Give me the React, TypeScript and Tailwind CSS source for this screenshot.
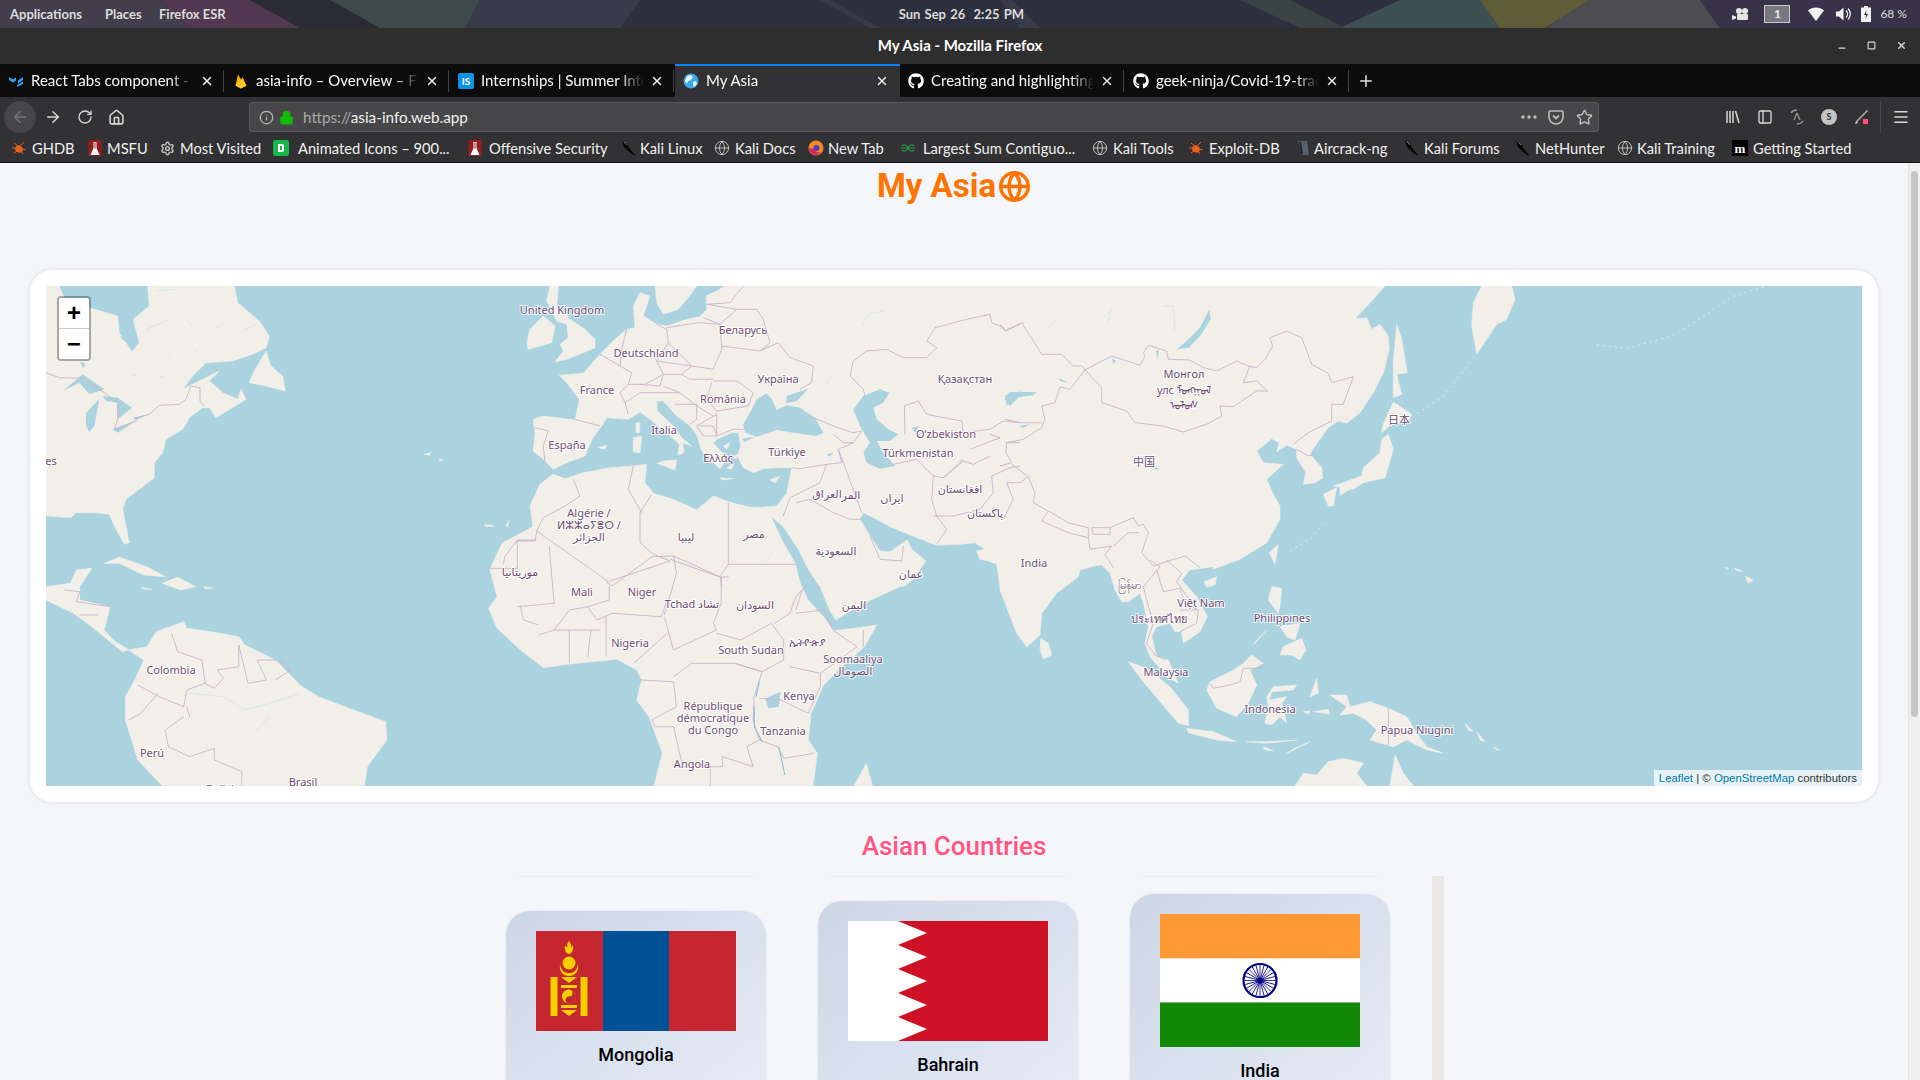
import React from "react";
import { ArrowLeft, ArrowRight, RotateCw, Home, Info, Lock, Star, Menu, X, Plus, Globe, Settings, Minus, Square, PanelLeft } from "lucide-react";
import { FaGithub } from "react-icons/fa";

const z = (ox: number, oy: number, sx: number, sy: number) => (s: string) =>
  s.trim().split(/\s+/).map((p) => {
    const [x, y] = p.split(",").map(Number);
    return `${(ox + x * sx).toFixed(1)},${(oy + y * sy).toFixed(1)}`;
  }).join(" ");
const T = 1 / 3;
const K = 960 / 1568;
const Z9 = z(46, 286, T, T);
const Z10 = z(500, 286, T, T);
const Z11 = z(1000, 286, T, T);
const Z12 = z(1000, 560, T, T);
const Z7 = z(0, 500, K, T);
const Z8 = z(960, 500, K, T);
const Z6 = z(960, 160, K, T);

const land: string[] = [
  // Eurasia and Africa
  Z11("1155,0 1120,40 1065,98 1100,95 1115,130 1140,115 1165,150 1168,190 1150,260 1120,320 1080,380 1040,412 1015,405 985,425 945,480 930,505 965,545 968,575 945,590 910,595 918,560 890,515 890,490 860,478 830,497 838,470 815,458 770,495 790,530 850,535 800,580 820,625 840,660 840,700 800,770 720,820 640,850") + " " +
    Z12("640,20 570,30 545,60 590,110 622,170 600,215 550,250 545,215 525,215 510,190 470,200 455,230 470,290 505,300 535,370 500,350 450,290 435,250 445,200 430,130 420,100 385,125 365,125 345,90 330,40 305,15 280,18 240,30 235,50 170,100 125,160 120,225 80,260 50,220 0,90") + " " +
    Z10("1500,900 1490,835 1465,825 1440,820 1430,795 1455,790 1425,770 1380,775 1310,778 1225,745 1170,722 1130,700 1090,680 1080,700 1110,750 1140,795 1170,797 1210,770 1222,762 1235,790 1278,825 1260,850 1240,880 1215,900") + " " +
    Z7("1470,260 1440,285 1400,320 1365,360 1355,330 1340,262") + " " +
    Z10("925,850 895,790 850,722 812,690 850,770 885,830 900,890") + " " +
    Z7("1320,300 1345,350 1362,392 1395,385 1432,375 1412,440 1375,500 1345,555 1325,640 1320,720 1335,760 1328,857 1068,857 1082,760 1060,650 1040,600 1048,540 1040,510 1008,478 930,492 888,503 850,450 812,385 798,325 812,290 800,208 820,130 870,80") + " " +
    Z10("95,690 90,660 120,595 158,565 195,578 250,560 330,545 395,540 440,535 435,590 460,622 520,640 590,672 640,630 700,652 760,665 830,660 860,622 872,560 875,545 830,545 790,548 760,560 730,545 712,510 722,480 715,440 695,440 650,460 640,472 682,515 660,548 640,530 605,495 590,445 565,415 530,390 490,345 470,345 472,375 520,420 545,455 575,480 548,470 552,500 535,508 538,475 500,440 450,400 420,378 385,400 320,395 305,420 278,455 255,510 200,530 160,550 130,520 100,495 105,440 100,400 130,390 225,402 238,340 200,290 178,268 250,262 300,205 345,160 380,130 405,125 400,60 420,20 450,30 430,90 470,115 500,120 560,100 600,92 620,70 618,30 650,15 675,0"),
  // Scandinavia, British Isles, Mediterranean islands
  Z10("465,0 590,0 565,35 535,70 490,85 470,50"),
  Z10("140,45 150,0 175,0 170,65 200,85 210,100 255,130 285,160 285,185 250,200 200,220 165,228 190,195 180,175 205,155 200,115 170,105"),
  Z10("90,130 130,90 165,120 155,170 85,190 80,170"),
  Z10("400,455 425,450 420,500 400,498"),
  Z10("408,410 420,410 418,440 408,440"),
  Z10("470,532 490,525 530,522 525,552"),
  Z10("295,485 320,478 315,490"),
  Z10("810,582 840,570 825,590"),
  Z10("660,575 700,578 665,582"),
  Z10("670,480 690,470 680,490"),
  Z10("700,510 715,505 708,520"),
  Z10("680,545 700,535 695,550"),
  // East Asia islands
  Z11("1190,115 1205,160 1222,260 1190,265 1205,325 1180,335 1180,230"),
  Z11("1445,0 1535,0 1545,40 1520,100 1490,115 1460,160 1430,205 1415,120 1420,50"),
  Z11("1180,348 1235,385 1225,405 1180,410 1145,440 1150,415"),
  Z11("1165,445 1180,490 1155,575 1090,590 1060,610 1000,600 1085,570 1090,545 1140,500 1145,460"),
  Z11("970,625 1010,605 1000,660 985,660"),
  Z11("1020,600 1065,600 1020,628"),
  Z11("835,775 825,835 808,800"),
  Z12("612,65 650,50 645,75 620,82"),
  Z12("122,235 145,250 155,285 130,297 120,270"),
  // South East Asia
  Z12("815,80 845,85 840,135 835,160 805,120"),
  Z12("840,200 900,190 885,240 860,230"),
  Z12("850,260 905,235 918,270 900,300 875,285 840,285"),
  Z12("800,210 760,255 775,235"),
  Z12("755,285 790,310 750,330 770,375 745,430 710,470 650,445 620,390 630,365 700,330 730,310"),
  Z12("385,305 440,325 510,380 550,430 565,450 565,497 535,490 480,425 430,365"),
  Z12("560,505 640,515 710,545 650,540 565,518"),
  Z12("740,545 800,545 890,540 800,550"),
  Z12("860,580 930,545 885,565"),
  Z12("790,560 820,572 795,570"),
  Z12("820,380 890,375 880,390 815,395 808,420 860,410 845,430 860,490 840,470 815,495 795,490 805,440 800,410"),
  Z12("910,455 930,452 925,462"),
  Z12("940,455 985,448 990,462"),
  Z12("930,410 950,355 955,400"),
  Z12("990,405 1040,405 1050,440 1110,425 1165,445 1220,470 1250,520 1280,560 1330,580 1280,570 1220,540 1180,560 1110,540 1130,510 1100,480 1060,460 1020,465 1040,440"),
  Z12("1395,490 1420,515 1405,510"),
  Z12("1430,515 1455,545 1440,540"),
  Z12("1480,560 1500,570 1490,570"),
  Z12("885,678 910,640 950,645 985,605 1030,595 1090,610 1070,640 1100,678"),
  Z12("1185,585 1210,640 1240,678 1170,678"),
  // North America
  Z9("0,0 40,0 60,50 130,65 215,90 220,140 258,198 280,170 262,100 310,60 305,0 565,0 575,50 640,105 670,150 660,185 620,205 560,225 480,230 440,270 410,310 520,255 490,285 530,320 575,340 585,310 600,340 510,395 490,365 470,365 430,395 410,430 360,460 350,500 325,530 325,575 240,640 230,670 250,770 235,775 205,720 190,685 150,680 90,680 75,695 0,690"),
  Z9("660,195 675,240 710,270 718,315 660,300 610,290 625,255"),
  Z7("75,260 115,250 125,210 150,205 130,260 130,300 180,320 170,390 185,420 210,450 200,455 150,380 120,340 75,300"),
  Z7("170,190 195,172 240,200 270,230 235,225 195,190"),
  Z7("265,250 290,232 320,260 295,270"),
  Z7("230,262 248,268 235,268"),
  Z7("333,260 348,265 335,266"),
  // South America
  Z7("210,450 240,440 255,395 300,365 305,385 345,395 390,410 400,435 450,480 490,555 520,590 570,625 630,665 632,720 600,800 595,857 265,857 225,780 205,660 205,590 220,540 235,480"),
  // Madagascar, Hawaii
  Z7("1395,857 1415,790 1425,857"),
  Z8("1283,228 1295,240 1288,250 1285,240"),
  Z8("1250,202 1256,206 1252,208"),
  Z8("1265,205 1278,214 1268,212"),
  // Atlantic specks
  Z9("1135,505 1155,500 1150,508"),
  Z9("1180,520 1192,522 1182,525"),
  Z9("1315,715 1345,720 1320,722"),
  Z9("1380,720 1390,702 1385,722"),
];

const water: string[] = [
  Z10("1140,310 1168,320 1150,350 1120,365 1130,400 1165,430 1195,445 1170,465 1130,465 1150,500 1185,540 1140,548 1100,530 1090,500 1110,470 1080,420 1060,370 1090,330"),
  Z10("750,380 770,340 800,322 815,340 830,372 860,358 900,365 945,395 970,440 950,450 880,440 830,432 770,452 735,440 730,415"),
  Z10("860,330 925,308 890,345 858,352"),
  Z10("725,458 765,452 735,468"),
  Z10("1515,340 1560,315 1560,330 1530,360"),
  Z10("980,505 1000,500 990,512"),
  Z10("1235,425 1258,420 1245,440"),
  Z11("628,70 632,100 600,150 565,185 530,190 560,165 600,125"),
  Z11("15,330 30,318 110,318 100,328 35,335 20,360"),
  Z11("55,420 90,415 70,425"),
  Z11("175,275 205,290 180,285"),
  Z11("335,218 350,225 340,232"),
  Z11("468,195 478,192 472,218"),
  Z11("460,540 478,548 465,552"),
  Z9("50,315 110,265 175,310 130,325 100,290"),
  Z9("120,380 160,340 145,420 130,438 120,420"),
  Z9("170,330 215,335 258,365 215,400 215,350 180,345"),
  Z9("200,430 270,405 215,440"),
  Z9("260,395 310,385 270,403"),
  Z9("220,150 245,160 235,165"),
  Z9("520,235 565,255 540,250"),
  Z9("255,40 280,60 260,68"),
  Z9("102,228 118,232 112,248"),
  Z7("1250,595 1275,575 1272,620 1255,625"),
];

const rivers: string[] = [
  Z7("1232,620 1232,680 1245,725"),
  Z7("1272,740 1282,825"),
  Z7("1240,545 1235,590"),
];

const streams: string[] = [
  Z7("310,580 365,590 400,630 440,610 490,580"),
  Z7("440,650 415,700"),
  Z10("800,240 830,260"),
  Z10("975,300 1000,260"),
  Z10("1085,120 1105,85 1150,75"),
  Z11("490,60 520,60 525,135"),
  Z11("310,95 335,70 320,120"),
  Z11("145,125 175,98"),
  Z10("790,835 820,800"),
  Z9("300,130 370,100"),
  Z9("500,130 535,110"),
  Z9("590,135 640,110"),
  Z9("360,215 380,195"),
  Z9("340,270 355,275"),
  Z9("420,100 445,125"),
  Z9("330,15 385,10"),
  Z9("440,185 455,200"),
  Z9("255,265 270,270"),
  Z9("385,265 395,272"),
];

const dashed: string[] = [
  Z11("1420,215 1390,255 1330,330 1240,390"),
  Z11("970,710 935,755 870,795"),
  Z6("1040,555 1090,565 1160,530 1210,475 1260,410 1315,380"),
];

const borders: string[] = [
  Z9("0,260 40,275 110,277 175,320 215,350 215,400 205,430 270,405 270,395 310,385 340,358 400,355 420,340 435,300 462,305 462,345 475,360"),
  Z10("225,400 300,420"),
  Z10("105,425 145,435 130,480 135,530"),
  Z10("300,205 360,240 395,260 385,295 360,320 375,350 385,385"),
  Z10("380,130 365,190 360,240"),
  Z10("470,115 500,130 505,170 470,225 490,265 435,295 385,295"),
  Z10("500,125 595,110 660,115 665,190 640,250 575,240 505,170"),
  Z10("470,225 575,240 545,265 490,265 480,300 420,295"),
  Z10("620,55 710,70 770,70 790,100 810,170 780,195 665,180"),
  Z10("620,55 690,50 730,0"),
  Z10("610,95 660,115 710,70"),
  Z10("780,195 835,170 870,215 940,240 935,290 900,310"),
  Z10("640,285 710,285 760,320 745,360 650,375 620,340 635,290"),
  Z10("545,265 570,280 640,280"),
  Z10("490,300 540,320 590,360 640,390"),
  Z10("525,355 590,355 590,400 570,415"),
  Z10("600,420 640,420 650,450 610,450 590,420 650,385 650,450 700,430 735,430"),
  Z10("375,350 420,320 495,320 540,320"),
  Z10("940,395 1000,420 1060,440 1085,435 1060,470 1015,490 1025,530 980,535 900,548 875,545"),
  Z10("980,535 960,590 870,635 850,690"),
  Z10("890,650 930,640 1000,680 1050,700 1085,700"),
  Z10("1015,490 1045,570 1070,640 1085,680"),
  Z10("1000,445 1030,470 1060,470"),
  Z10("1110,750 1140,820 1205,825 1210,780"),
  Z10("1180,535 1250,520 1300,570 1330,575 1390,520"),
  Z10("1300,570 1295,640 1310,690 1340,730 1310,775"),
  Z10("1300,690 1360,690 1440,670 1480,620 1475,570 1530,545 1560,540"),
  Z10("1330,575 1390,525 1420,535 1470,510"),
  Z10("1215,445 1213,360 1255,345 1280,385 1385,405 1390,440 1470,430 1510,405 1560,410"),
  Z10("1410,490 1460,470 1500,455 1470,445"),
  Z10("1515,470 1560,470"),
  Z10("1060,225 1100,195 1160,190 1210,215 1280,215 1310,185 1280,165 1305,125 1400,100 1470,85 1475,110 1510,125 1515,135 1560,115"),
  Z10("1060,225 1050,270 1090,310 1095,330"),
  Z11("0,115 15,135 65,110 125,205 185,205 220,240 245,240 255,252 335,210 420,238 435,210 430,200 445,178 500,195 505,220 570,222 610,245 650,255 710,225 745,240 770,245 795,220 818,180 810,155 860,135 905,155 935,235 985,262 995,290 1060,272 1030,355 995,355 995,405 925,440 880,475"),
  Z11("255,252 305,305 305,350 380,375 405,410 490,420 550,438 620,415 665,390 660,360 700,362 770,315 803,315 770,285 730,290 750,240"),
  Z11("255,252 210,310 180,303 165,350 125,360 135,400 125,425 70,460 20,470 18,500 35,530 0,540"),
  Z11("15,400 60,410 125,410"),
  Z11("35,535 85,572 105,620 100,650 145,675 205,710 265,725"),
  Z11("145,675 125,705 205,740 265,755 265,725"),
  Z11("275,725 330,725 330,745 280,745 275,725"),
  Z11("330,725 400,695 415,720 430,715 445,740 425,800 460,840 505,825 555,810 600,845"),
  Z11("265,755 270,790 335,780 315,805 340,845"),
  Z11("340,780 385,740 415,740"),
  Z11("20,590 60,590 85,572"),
  Z11("20,590 40,640 10,700"),
  Z11("890,490 925,510 945,505"),
  Z12("450,0 480,20 430,80 440,120 460,190 440,250 465,285 495,300"),
  Z12("470,30 490,95 540,85 555,130 595,150 590,190 540,215"),
  Z12("500,0 545,40 530,65 590,150 540,150"),
  Z12("630,370 640,385 690,375 720,365 730,325 790,325"),
  Z12("1165,445 1165,555"),
  Z10("220,580 240,630 195,660 130,695 110,735 105,765 50,765 15,810 10,835"),
  Z10("110,735 330,890"),
  Z10("400,540 385,610 425,680"),
  Z10("455,625 420,680 420,770 460,805"),
  Z10("685,650 685,835 660,870 665,900"),
  Z10("685,835 888,835"),
  Z10("510,820 665,875"),
  Z10("460,805 510,825 330,885"),
  Z7("897,138 905,310 845,320"),
  Z7("990,245 1000,258 1065,170 1100,168 1178,232 1190,230"),
  Z7("1100,168 1105,220 1085,345"),
  Z7("800,205 845,205 845,120 875,120"),
  Z7("995,258 995,300 960,320 930,330 905,390 880,405"),
  Z7("850,320 855,360 880,375"),
  Z7("960,320 975,360 1000,340 1080,350 1090,300"),
  Z7("1178,232 1178,310 1165,370 1170,390"),
  Z7("1085,350 1100,450 1170,390"),
  Z7("990,350 990,470"),
  Z7("1090,400 1035,490"),
  Z7("1170,400 1210,420 1260,370 1280,420 1280,480 1245,515 1200,490"),
  Z7("1300,340 1345,330 1360,390 1400,440 1340,520 1290,500"),
  Z7("1310,270 1300,330"),
  Z7("1320,250 1300,290 1290,340 1265,370"),
  Z7("1410,440 1410,390"),
  Z7("1340,520 1340,560 1320,640 1275,600 1240,595"),
  Z7("1245,515 1230,600"),
  Z7("1100,530 1130,490 1200,490 1245,515"),
  Z7("1232,600 1230,660 1240,720 1220,740 1230,800 1180,770 1180,800 1115,800 1100,680 1070,680"),
  Z7("1045,540 1100,545 1105,620 1065,660 1070,680"),
  Z7("1240,720 1270,740 1280,775 1330,760"),
  Z7("1160,800 1160,857"),
  Z7("930,390 930,490"),
  Z7("965,390 960,470"),
  Z7("905,390 930,390 980,390"),
  Z7("280,400 290,455 330,480 335,550 350,565 365,535 355,510 390,500 390,435 405,550 435,540 420,480 455,480 475,510 450,540"),
  Z7("225,555 260,590 300,620 305,570 335,550"),
  Z7("300,650 270,690 275,740 310,770 350,745 350,780 395,815 395,857"),
  Z7("258,580 230,640 210,660"),
  Z7("305,620 310,650"),
  Z7("105,270 130,275 125,305 180,320"),
  Z7("130,345 160,345"),
];

const labels: [string, number, number][] = [
  ["United Kingdom", 562, 309], ["Беларусь", 743, 329], ["Deutschland", 646, 352], ["Україна", 778, 378],
  ["Қазақстан", 965, 378], ["France", 597, 389], ["România", 723, 398], ["Italia", 664, 429],
  ["O‘zbekiston", 946, 433], ["Türkmenistan", 918, 452], ["España", 567, 444], ["Ελλάς", 718, 457],
  ["Türkiye", 787, 451], ["العراق", 827, 493], ["المر", 851, 494], ["ایران", 892, 497],
  ["افغانستان", 960, 488], ["پاکستان", 985, 512], ["السعودية", 836, 550], ["مصر", 754, 533],
  ["ليبيا", 686, 536], ["Algérie /", 589, 512], ["ⵍⵣⵣⴰⵢⴻⵔ /", 589, 524], ["الجزائر", 589, 536],
  ["موريتانيا", 520, 571], ["عمان", 911, 573], ["Mali", 582, 591], ["Niger", 642, 591],
  ["Tchad تشاد", 692, 603], ["السودان", 755, 604], ["اليمن", 854, 604], ["Nigeria", 630, 642],
  ["South Sudan", 751, 649], ["ኢትዮጵያ", 807, 641], ["Soomaaliya", 853, 658], ["الصومال", 853, 670],
  ["Colombia", 171, 669], ["Kenya", 799, 695], ["République", 713, 705], ["démocratique", 713, 717],
  ["du Congo", 713, 729], ["Tanzania", 783, 730], ["Angola", 692, 763], ["Perú", 152, 752],
  ["Brasil", 303, 781], ["Bolivia", 223, 788], ["es", 51, 460], ["Монгол", 1184, 373],
  ["улс ᠮᠣᠩᠭᠣᠯ", 1184, 389], ["ᠤᠯᠤᠰ", 1184, 404], ["日本", 1399, 419], ["中国", 1144, 461],
  ["India", 1034, 562], ["မြန်မာ", 1129, 584], ["Việt Nam", 1201, 602], ["ประเทศไทย", 1159, 618],
  ["Philippines", 1282, 617], ["Malaysia", 1166, 671], ["Indonesia", 1270, 708], ["Papua Niugini", 1417, 729],
];

function WorldMap() {
  return (
    <svg viewBox="46 286 1816 500" className="absolute inset-0 block h-full w-full [font-family:'Noto_Sans','DejaVu_Sans','Noto_Sans_CJK_SC',sans-serif]">
      {land.map((p, i) => <polygon key={i} points={p} fill="#f2efe9" stroke="#f2efe9" strokeWidth="0.6" strokeLinejoin="round" />)}
      {streams.map((p, i) => <polyline key={i} points={p} fill="none" stroke="#d5e6ea" strokeWidth="0.9" />)}
      {water.map((p, i) => <polygon key={i} points={p} fill="#aad3df" />)}
      {dashed.map((p, i) => <polyline key={i} points={p} fill="none" stroke="#e4e8e4" strokeWidth="1" strokeDasharray="2 4" />)}
      {borders.map((p, i) => <polyline key={i} points={p} fill="none" stroke="#c8b3c8" strokeWidth="0.9" strokeLinejoin="round" />)}
      {rivers.map((p, i) => <polyline key={i} points={p} fill="none" stroke="#8fbcd0" strokeWidth="1.1" />)}
      {labels.map(([t, x, y]) => (
        <text key={t} x={x} y={y} textAnchor="middle" dominantBaseline="central" fontSize="11" className="fill-[#6f4f73] stroke-white/80 stroke-[2px] [paint-order:stroke]">{t}</text>
      ))}
    </svg>
  );
}

function Bug({ c = "#e8601c" }: { c?: string }) {
  return (
    <svg viewBox="0 0 16 16" className="h-4 w-4 shrink-0">
      <path d="M3 3l4 3M13 2L9 6M1 8h4M11 9l4 1M3 13l3-2M12 14l-2-3" stroke={c} strokeWidth="1" />
      <ellipse cx="8" cy="9" rx="4" ry="3.4" fill={c} transform="rotate(25 8 9)" />
    </svg>
  );
}
function Msf() {
  return (
    <svg viewBox="0 0 16 16" className="h-4 w-4 shrink-0">
      <rect x="1.5" y="0" width="13" height="16" fill="#8f1d22" />
      <path d="M6.5 2h3v6l3 7h-9l3-7z" fill="#fff" />
      <path d="M7.5 2.5h1v6h-1z" fill="#8f1d22" />
    </svg>
  );
}
function Dragon() {
  return (
    <svg viewBox="0 0 16 16" className="h-4 w-4 shrink-0">
      <path d="M1 1l5 3 3 5 5 6-1 .5L7 11 3 7z" fill="#060606" />
      <path d="M3 2l3 3" stroke="#999" strokeWidth=".7" />
    </svg>
  );
}
function Earth() {
  return <Globe size={16} strokeWidth={1.4} className="shrink-0 text-[#c8c8c8]" />;
}

const bookmarks: { t: string; w: string; ic: React.ReactNode; g: string }[] = [
  { t: "GHDB", w: "w-[76px]", g: "gap-[5px]", ic: <Bug /> },
  { t: "MSFU", w: "w-[73px]", g: "gap-[4px]", ic: <Msf /> },
  { t: "Most Visited", w: "w-[113px]", g: "gap-[5px]", ic: <Settings size={15} strokeWidth={2.2} className="shrink-0 text-[#c8c8c8]" /> },
  { t: "Animated Icons – 900...", w: "w-[194px]", g: "gap-[9px]", ic: <span className="flex h-4 w-4 shrink-0 items-center justify-center rounded-[2px] bg-[#16b84e]"><span className="h-2 w-1.5 rounded-r-[2px] border-2 border-white" /></span> },
  { t: "Offensive Security", w: "w-[154px]", g: "gap-[6px]", ic: <Msf /> },
  { t: "Kali Linux", w: "w-[93px]", g: "gap-[3px]", ic: <Dragon /> },
  { t: "Kali Docs", w: "w-[94px]", g: "gap-[5px]", ic: <Earth /> },
  { t: "New Tab", w: "w-[92px]", g: "gap-[4px]", ic: <svg viewBox="0 0 16 16" className="h-4 w-4 shrink-0"><circle cx="8" cy="8" r="7.5" fill="#f58a1f" /><path d="M1 8a7 7 0 0 0 7 7c2 0 4-1 5-3-3 1-6 0-7-3z" fill="#d7265e" /><circle cx="8.5" cy="8" r="3" fill="#4a3bc4" /></svg> },
  { t: "Largest Sum Contiguo...", w: "w-[192px]", g: "gap-[7px]", ic: <svg viewBox="0 0 16 16" className="h-4 w-4 shrink-0"><path d="M1 8h14M2 6c2-2 5-1 6 2s4 4 6 2M14 6c-2-2-5-1-6 2s-4 4-6 2" fill="none" stroke="#2f8d46" strokeWidth="1.2" /></svg> },
  { t: "Kali Tools", w: "w-[96px]", g: "gap-[5px]", ic: <Earth /> },
  { t: "Exploit-DB", w: "w-[107px]", g: "gap-[5px]", ic: <Bug /> },
  { t: "Aircrack-ng", w: "w-[109px]", g: "gap-[3px]", ic: <svg viewBox="0 0 16 16" className="h-4 w-4 shrink-0"><path d="M3 1h9l2 14-7 0z" fill="#56616a" /><path d="M5 2l2 12" stroke="#1e2428" strokeWidth="2" /></svg> },
  { t: "Kali Forums", w: "w-[111px]", g: "gap-[4px]", ic: <Dragon /> },
  { t: "NetHunter", w: "w-[102px]", g: "gap-[4px]", ic: <Dragon /> },
  { t: "Kali Training", w: "w-[115px]", g: "gap-[4px]", ic: <Earth /> },
  { t: "Getting Started", w: "w-[130px]", g: "gap-[5px]", ic: <span className="flex h-4 w-4 shrink-0 items-center justify-center bg-black text-[13px] font-bold leading-none text-white [font-family:'Liberation_Serif',serif]">m</span> },
];

const tabs: { t: string; active?: boolean; ic: React.ReactNode }[] = [
  { t: "React Tabs component - Material-UI", ic: <svg viewBox="0 0 16 16" className="h-4 w-4"><path d="M1 4l4 2.5L8 4.5v3L5 9.5 1 7zM15 4v3l-5 3.5V7.5zM9 12l6-3.5v2.5L9 14z" fill="#2aa4f4" /></svg> },
  { t: "asia-info – Overview – Firebase", ic: <svg viewBox="0 0 16 16" className="h-[18px] w-[18px]"><path d="M2.500 12.500L5 1.500 8 6.500 9.500 4 13.500 12.500 8 15.500z" fill="#ffb300" /><path d="M2.500 12.500L8 6.500l5.500 6L8 15.500z" fill="#ffca28" /></svg> },
  { t: "Internships | Summer Internship", ic: <span className="flex h-4 w-4 items-center justify-center rounded-[2px] bg-[#0e94e4] text-[10px] font-bold leading-none text-white">IS</span> },
  { t: "My Asia", active: true, ic: <svg viewBox="0 0 16 16" className="h-4 w-4"><circle cx="8" cy="8" r="7.5" fill="#39a9e8" /><path d="M4 3l4-1 2 2-2 3-3 1-1 3-2-3zM10 9l3-1 1 3-3 3-1-2z" fill="#e6f4fb" /></svg> },
  { t: "Creating and highlighting code blocks", ic: <FaGithub size={16} className="text-white" /> },
  { t: "geek-ninja/Covid-19-tracker", ic: <FaGithub size={16} className="text-white" /> },
];

function Wallpaper() {
  return (
    <svg viewBox="0 0 1920 28" preserveAspectRatio="none" className="absolute inset-0 h-full w-full">
      <rect width="1920" height="28" fill="#2e303d" />
      <polygon points="0,0 160,0 190,28 0,28" fill="#433e4c" />
      <polygon points="160,0 250,0 300,28 190,28" fill="#523850" />
      <polygon points="250,0 330,0 380,28 300,28" fill="#2b2b36" />
      <polygon points="330,0 480,0 465,28 380,28" fill="#3e4a4a" />
      <polygon points="480,0 640,0 620,28 465,28" fill="#383b49" />
      <polygon points="1000,0 1020,28 1040,28 1012,0" fill="#373a48" />
      <polygon points="820,0 870,28 880,28 830,0" fill="#373a48" />
      <polygon points="1240,0 1300,28 1345,28 1290,0" fill="#3a4445" />
      <polygon points="1340,28 1400,0 1480,0 1500,28" fill="#3d5153" />
      <polygon points="1480,0 1590,0 1545,28 1500,28" fill="#5e5d38" />
      <polygon points="1590,0 1700,0 1720,28 1545,28" fill="#4d4c50" />
      <polygon points="1700,0 1920,0 1920,28 1720,28" fill="#393349" />
    </svg>
  );
}

function Mongolia() {
  return (
    <svg viewBox="0 0 200 100" className="block h-[100px] w-[200px]">
      <rect width="200" height="100" fill="#c4272f" />
      <rect x="67" width="66" height="100" fill="#015197" />
      <g fill="#f9cf02">
        <path d="M33 10c2 3 3 4 1.500 6 2 0 2.500-2 2.500-2 .5 4 0 8-4 9-4-1-4.500-5-4-9 1 2 2 2 2.500 2-1-2 0-4 1.500-6z" />
        <circle cx="33" cy="32" r="6.500" />
        <path d="M24 33c1 7 5 9 9 9s8-2 9-9c1 8-3 12-9 12s-10-4-9-12z" />
        <path d="M25 46h16l-8 6z" />
        <rect x="14.500" y="46" width="7" height="39" />
        <rect x="44.500" y="46" width="7" height="39" />
        <rect x="25" y="54" width="16" height="3" />
        <rect x="25" y="74" width="16" height="3" />
        <path d="M25 79h16l-8 6z" />
        <circle cx="33" cy="65.500" r="7" />
      </g>
      <path d="M33 58.500a3.500 3.500 0 0 1 0 7 3.500 3.500 0 0 0 0 7 7 7 0 0 0 0-14z" fill="#c4272f" />
    </svg>
  );
}
function Bahrain() {
  return (
    <svg viewBox="0 0 200 120" className="block h-[120px] w-[200px]">
      <rect width="200" height="120" fill="#ce1126" />
      <path d="M0 0h50l29 12-29 12 29 12-29 12 29 12-29 12 29 12-29 12 29 12-29 12H0z" fill="#fff" />
    </svg>
  );
}
function India() {
  const spokes = Array.from({ length: 24 }, (_, i) => i * 15);
  return (
    <svg viewBox="0 0 200 133" className="block h-[133px] w-[200px]">
      <rect width="200" height="44.500" fill="#ff9933" />
      <rect y="44.500" width="200" height="44" fill="#fff" />
      <rect y="88.500" width="200" height="44.500" fill="#128807" />
      <circle cx="100" cy="66.500" r="16.500" fill="none" stroke="#000080" strokeWidth="2.200" />
      <circle cx="100" cy="66.500" r="3" fill="#000080" />
      {spokes.map((a) => <line key={a} x1="100" y1="66.500" x2="100" y2="51" stroke="#000080" strokeWidth="0.800" transform={`rotate(${a} 100 66.500)`} />)}
    </svg>
  );
}

function CountryCard({ name, flag }: { name: string; flag: React.ReactNode }) {
  return (
    <div className="w-[260px] rounded-[24px] bg-gradient-to-br from-[#cdd6e5] to-[#e6ecf7] px-[30px] pt-5 pb-9 shadow-[0_0_3px_rgba(0,0,0,0.08)]">
      {flag}
      <div className="mt-[14px] text-center text-[18px] leading-5 font-medium text-black">{name}</div>
    </div>
  );
}

export default function App() {
  return (
    <div className="flex h-screen w-full flex-col overflow-hidden bg-[#f5f6fa] [font-family:Lato,sans-serif]">
      <div className="relative flex h-7 shrink-0 items-center text-[13px] font-bold text-[#dcdcdc]">
        <Wallpaper />
        <span className="relative top-px ml-[10px] w-[95px]">Applications</span>
        <span className="relative top-px w-[54px]">Places</span>
        <span className="relative top-px">Firefox ESR</span>
        <span className="relative top-px ml-[673px] w-[124px] whitespace-nowrap [word-spacing:1px]">Sun Sep 26 &nbsp;2:25 PM</span>
        <div className="relative ml-auto flex items-center">
          <svg viewBox="0 0 18 14" className="mr-[14px] h-[14px] w-[18px]"><circle cx="7" cy="4" r="3" fill="#e5e5e5" /><circle cx="13" cy="4" r="3" fill="#e5e5e5" /><rect x="5" y="7" width="11" height="6" rx="1" fill="#e5e5e5" /><path d="M0 8l4 1.500v2L0 13z" fill="#e5e5e5" /></svg>
          <span className="mr-[18px] flex h-[18px] w-[26px] items-center justify-center border border-[#c9c9c9] bg-[#77787f] text-[12px] leading-none font-bold text-[#eee]">1</span>
          <svg viewBox="0 0 16 14" className="mr-[11px] h-[14px] w-[16px]"><path d="M0 3.500C4-.5 12-.5 16 3.500L8 14z" fill="#f2f2f2" /></svg>
          <svg viewBox="0 0 16 16" className="mr-[10px] h-4 w-4"><path d="M1 5.500h3L8.500 1.500v13L4 10.500H1z" fill="#f2f2f2" /><path d="M11 4.500c2 2 2 5 0 7M13 2.500c3 3 3 8 0 11" fill="none" stroke="#f2f2f2" strokeWidth="1.300" /></svg>
          <svg viewBox="0 0 10 16" className="mr-[9px] h-4 w-[10px]"><path d="M3 0h4v1.500h3V16H0V1.500h3z" fill="#f2f2f2" /><path d="M5.500 4L3 9h2l-.5 4L7 8H5z" fill="#393349" /></svg>
          <span className="mr-[13px] text-[12px] font-normal">68 %</span>
        </div>
      </div>

      <div className="relative flex h-9 shrink-0 items-center justify-center bg-[#2e2e2e] pb-[2px] text-[15px] font-bold text-white">
        My Asia - Mozilla Firefox
        <div className="absolute right-[13px] flex items-center gap-[20px] text-[#d8d8d8]">
          <Minus size={10} strokeWidth={3} className="translate-y-[3px]" />
          <Square size={9} strokeWidth={3} />
          <X size={11} strokeWidth={3} />
        </div>
      </div>

      <div className="flex h-[33px] shrink-0 bg-[#0c0c0d] text-[15px] text-[#f9f9fa]">
        {tabs.map((t) => (
          <div key={t.t} className={t.active ? "flex w-[225px] shrink-0 items-center border-t-2 border-[#0a84ff] bg-[#323234] pr-[11px] pb-[2px] pl-2" : "flex w-[225px] shrink-0 items-center pr-[11px] pl-2"}>
            <span className="flex w-4 shrink-0 justify-center">{t.ic}</span>
            <span className="ml-[7px] min-w-0 flex-1 overflow-hidden whitespace-nowrap [mask-image:linear-gradient(to_left,transparent,black_24px)]">{t.t}</span>
            <X size={14} strokeWidth={2.5} className="ml-[6px] shrink-0 text-[#eee]" />
            {!t.active && <span className="ml-[9px] h-[22px] w-px shrink-0 bg-[#444] -mr-[10px]" />}
          </div>
        ))}
        <Plus size={18} strokeWidth={2} className="mt-2 ml-[7px] text-[#e5e5e5]" />
      </div>

      <div className="flex h-[38px] shrink-0 items-center bg-[#323234] pt-[2px] text-[#d7d7d8]">
        <span className="ml-1 flex h-8 w-8 items-center justify-center rounded-full bg-[#47474a]"><ArrowLeft size={18} className="text-[#77777a]" /></span>
        <ArrowRight size={18} className="ml-[8px]" />
        <RotateCw size={16} className="ml-[15px]" />
        <Home size={17} strokeWidth={2.2} className="ml-[15px]" />
        <div className="ml-[124px] flex h-[30px] w-[1350px] items-center rounded-[3px] border border-[#59595b] bg-[#474749] text-[15.300px]">
          <Info size={15} className="ml-[9px] text-[#b5b5b5]" />
          <Lock size={15} fill="#12bc00" className="ml-[5px] text-[#12bc00]" />
          <span className="ml-[9px]"><span className="text-[#a9a9ab]">https://</span><span className="text-[#f0f0f0]">asia-info.web.app</span></span>
          <span className="ml-auto flex items-center text-[#bdbdbe]">
            <svg viewBox="0 0 16 4" className="mr-[11px] h-1 w-4"><circle cx="2" cy="2" r="1.700" fill="currentColor" /><circle cx="8" cy="2" r="1.700" fill="currentColor" /><circle cx="14" cy="2" r="1.700" fill="currentColor" /></svg>
            <svg viewBox="0 0 16 16" className="mr-[12px] h-4 w-4"><path d="M2 2h12a1 1 0 0 1 1 1v5a7 7 0 0 1-14 0V3a1 1 0 0 1 1-1z" fill="none" stroke="currentColor" strokeWidth="1.600" /><path d="M5 6.500l3 3 3-3" fill="none" stroke="currentColor" strokeWidth="1.800" /></svg>
            <Star size={17} strokeWidth={2} className="mr-[5px]" />
          </span>
        </div>
        <svg viewBox="0 0 16 16" className="ml-[126px] h-4 w-4"><path d="M2 2v12M5 2v12M8 2v12M10.500 2l3.500 12" stroke="currentColor" strokeWidth="1.500" fill="none" /></svg>
        <PanelLeft size={16} className="ml-[16px]" />
        <svg viewBox="0 0 16 16" className="ml-[16px] h-4 w-4 text-[#9a9a9a]"><path d="M8 1c-3 0-5 1.500-6 3M8 15c3 0 5-1.500 6-3M8 4l-3 7M8 4l3 7" fill="none" stroke="currentColor" strokeWidth="1.300" /></svg>
        <span className="ml-[16px] flex h-4 w-4 items-center justify-center rounded-full bg-[#c4c4c4] text-[9px] font-bold text-[#323234]">S</span>
        <svg viewBox="0 0 16 16" className="ml-[16px] h-4 w-4"><path d="M14 1L3 12l1 1L15 2z" fill="#b5b5b5" /><path d="M3 12l-1 3 3-1z" fill="#ddd" /><rect x="10" y="10" width="5" height="5" fill="#ff4f7b" /></svg>
        <span className="ml-[11px] h-8 w-px bg-[#4a4a4c]" />
        <Menu size={18} strokeWidth={2.200} className="ml-[11px]" />
      </div>

      <div className="box-content flex h-[27px] shrink-0 items-center border-b border-[#121214] bg-[#323234] pl-[11px] text-[14.700px] whitespace-nowrap text-[#f0f0f0]">
        {bookmarks.map((b) => (
          <span key={b.t} className={`flex shrink-0 items-center ${b.w} ${b.g}`}>
            {b.ic}
            <span>{b.t}</span>
          </span>
        ))}
      </div>

      <div className="flex min-h-0 flex-1">
        <main className="min-w-0 flex-1 overflow-hidden [font-family:Roboto,sans-serif]">
          <h1 className="flex h-[46px] items-center justify-center text-[33px] font-bold text-[#ff7300]">
            My Asia<Globe size={33} strokeWidth={2.500} className="ml-[2px]" />
          </h1>
          <section className="mx-[30px] mt-[61px] rounded-[22px] bg-white p-4 shadow-[0_0_4px_rgba(0,0,0,0.12)]">
            <div className="relative h-[500px] overflow-hidden bg-[#aad3df]">
              <WorldMap />
              <div className="absolute top-[10px] left-[11px] w-[34px] overflow-hidden rounded-[4px] border-2 border-black/30 bg-clip-padding">
                <div className="flex h-[31px] items-center justify-center border-b border-[#ccc] bg-white pt-[3px] text-[24px] font-bold text-black [font-family:'Liberation_Mono',monospace]">+</div>
                <div className="flex h-[30px] items-center justify-center bg-white pt-[3px] text-[24px] font-bold text-black [font-family:'Liberation_Mono',monospace]">−</div>
              </div>
              <div className="absolute right-0 bottom-0 bg-white/70 px-[5px] text-[11.400px] leading-4 text-[#333] [font-family:'Liberation_Sans',sans-serif]">
                <span className="text-[#0078a8]">Leaflet</span> | © <span className="text-[#0078a8]">OpenStreetMap</span> contributors
              </div>
            </div>
          </section>
          <h2 className="mt-[28px] h-[32px] text-center text-[26px] leading-8 font-medium text-[#ff5582]">Asian Countries</h2>
          <div className="mx-auto mt-[14px] flex h-[204px] w-[980px] overflow-hidden">
            <div className="min-w-0 flex-1">
              <div className="grid h-px grid-cols-[312px_312px_312px] justify-center">
                <span className="mx-[38px] h-px bg-[#eceef3]" />
                <span className="mx-[38px] h-px bg-[#eceef3]" />
                <span className="mx-[38px] h-px bg-[#eceef3]" />
              </div>
              <div className="mt-[17px] grid grid-cols-[312px_312px_312px] items-center justify-center justify-items-center">
                <CountryCard name="Mongolia" flag={<Mongolia />} />
                <CountryCard name="Bahrain" flag={<Bahrain />} />
                <CountryCard name="India" flag={<India />} />
              </div>
            </div>
            <div className="w-3 shrink-0 bg-[#e9e8e5]" />
          </div>
        </main>
        <div className="w-3 shrink-0 border-l border-[#e2e2e2] bg-[#f0f0f0] px-[2px] pt-2">
          <div className="h-[546px] rounded-full bg-[#c5c5c5]" />
        </div>
      </div>
    </div>
  );
}
